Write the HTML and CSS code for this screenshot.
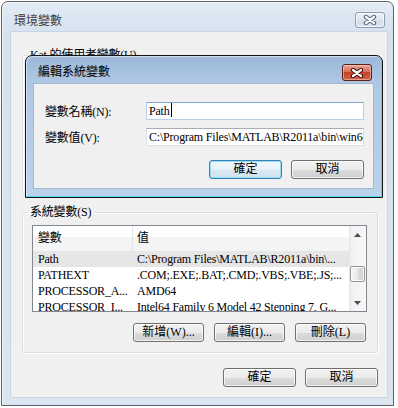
FILE: index.html
```html
<!DOCTYPE html>
<html lang="zh-TW">
<head>
    <meta charset="UTF-8">
    <title>環境變數</title>
    <link rel="stylesheet" href="styles.css">
</head>
<body>
    <div class="window env-window">
        <div class="titlebar">
            <span class="title">環境變數</span>
            <span class="close-btn inactive">
                <svg width="14" height="10" viewBox="0 0 14 10"><path d="M3 2 L11 8 M11 2 L3 8" stroke="#56657a" stroke-width="4.4" stroke-linecap="round"/><path d="M3 2 L11 8 M11 2 L3 8" stroke="#fff" stroke-width="2.2" stroke-linecap="round"/></svg>
            </span>
        </div>
        <div class="client">
            <!-- user variables: covered by the edit dialog -->
            <fieldset class="group user-group">
                <legend>Kat 的使用者變數(U)</legend>
            </fieldset>

            <fieldset class="group">
                <legend>系統變數(S)</legend>
                <div class="listview">
                    <div class="lv-body">
                        <div class="lv-header"><span class="col-name">變數</span><span class="col-value">值</span></div>
                        <div class="lv-row selected"><span class="col-name">Path</span><span class="col-value">C:\Program Files\MATLAB\R2011a\bin\...</span></div>
                        <div class="lv-row"><span class="col-name">PATHEXT</span><span class="col-value">.COM;.EXE;.BAT;.CMD;.VBS;.VBE;.JS;...</span></div>
                        <div class="lv-row"><span class="col-name">PROCESSOR_A...</span><span class="col-value">AMD64</span></div>
                        <div class="lv-row"><span class="col-name">PROCESSOR_I...</span><span class="col-value">Intel64 Family 6 Model 42 Stepping 7, G...</span></div>
                    </div>
                    <div class="scrollbar">
                        <div class="sb-arrow">
                            <svg width="7" height="4" viewBox="0 0 7 4"><path d="M0 4 L3.5 0 L7 4 Z" fill="#4d4d4d"/></svg>
                        </div>
                        <div class="sb-track"><div class="sb-thumb"></div></div>
                        <div class="sb-arrow">
                            <svg width="7" height="4" viewBox="0 0 7 4"><path d="M0 0 L3.5 4 L7 0 Z" fill="#4d4d4d"/></svg>
                        </div>
                    </div>
                </div>
                <div class="button-row group-buttons">
                    <button class="btn small">新增(W)...</button>
                    <button class="btn small">編輯(I)...</button>
                    <button class="btn small">刪除(L)</button>
                </div>
            </fieldset>

            <div class="button-row footer-buttons">
                <button class="btn">確定</button>
                <button class="btn">取消</button>
            </div>
        </div>
    </div>

    <div class="window edit-dialog">
        <div class="titlebar">
            <span class="title">編輯系統變數</span>
            <span class="close-btn active">
                <svg width="14" height="10" viewBox="0 0 14 10"><path d="M3 2 L11 8 M11 2 L3 8" stroke="#3f1208" stroke-width="4.4" stroke-linecap="round"/><path d="M3 2 L11 8 M11 2 L3 8" stroke="#fff" stroke-width="2.2" stroke-linecap="round"/></svg>
            </span>
        </div>
        <div class="client">
            <div class="field-row">
                <label class="field-label">變數名稱(N):</label>
                <div class="textbox focused">Path<span class="caret"></span></div>
            </div>
            <div class="field-row">
                <label class="field-label">變數值(V):</label>
                <div class="textbox">C:\Program Files\MATLAB\R2011a\bin\win64;C:\Windows\system32</div>
            </div>
            <div class="button-row dialog-buttons">
                <button class="btn default">確定</button>
                <button class="btn">取消</button>
            </div>
        </div>
    </div>
</body>
</html>
```

FILE: styles.css
```css
* {
    box-sizing: border-box;
}
body {
    margin: 0;
    width: 398px;
    height: 408px;
    overflow: hidden;
    position: relative;
    background: #fff;
    font-family: "Liberation Serif", "Noto Sans CJK TC", serif;
    font-size: 12px;
    letter-spacing: -0.2px;
    color: #000;
}
.window {
    display: flex;
    flex-direction: column;
    border: 1px solid #5b6067;
    border-radius: 7px 7px 0 0;
}
.titlebar {
    flex: none;
    display: flex;
    align-items: flex-start;
    justify-content: space-between;
}
.title {
    font-family: "Noto Sans CJK TC", sans-serif;
    font-size: 12px;
    line-height: 16px;
    letter-spacing: 0;
}
.close-btn {
    display: flex;
    align-items: center;
    justify-content: center;
    width: 30px;
    border-radius: 3px;
}

/* outer window (inactive) */
.env-window {
    margin: 1px 0 0 1px;
    width: 393px;
    height: 405px;
    padding: 0 5px 7px 8px;
    background: linear-gradient(#e3ebf5, #d6e2ef 30px, #dbe5f1);
    box-shadow: inset 1px 1px 0 rgba(255, 255, 255, 0.7);
}
.env-window .titlebar {
    height: 29px;
}
.env-window .title {
    margin: 10px 0 0 4px;
    color: #3f3f3f;
}
.env-window .close-btn {
    margin: 10px 3px 0 0;
    height: 16px;
}
.close-btn.inactive {
    border: 1px solid #8d9cb0;
    background: linear-gradient(#edf2f8, #dde6f0 50%, #d2dde9 50%, #dce5ef);
    box-shadow: inset 0 0 0 1px rgba(255, 255, 255, 0.6);
}
.env-window > .client {
    flex: 1;
    background: #f0f0f0;
    border: 1px solid #c8d5e3;
    padding: 0 9px 0 11px;
    display: flex;
    flex-direction: column;
}

/* group boxes */
.group {
    margin: 0;
    padding: 6px 10px 10px 9px;
    border: 1px solid #d5dfe5;
    border-radius: 3px;
    box-shadow: inset 1px 1px 0 #fff, 1px 1px 0 #fff;
    min-width: 0;
}
.group legend {
    padding: 0 2px;
    margin-left: -4px;
    line-height: 14px;
}
.user-group {
    margin-top: 16px;
    height: 148px;
}
.user-group + .group {
    margin-top: 9px;
}

/* list view */
.listview {
    display: flex;
    height: 87px;
    border: 1px solid #828790;
    background: #fff;
}
.lv-body {
    flex: 1;
    overflow: hidden;
}
.lv-header, .lv-row {
    display: flex;
    white-space: nowrap;
}
.lv-header {
    height: 25px;
    line-height: 25px;
    background: linear-gradient(#fff 45%, #f3f4f6 45%);
}
.lv-header .col-name {
    border-right: 1px solid #e3e5e8;
}
.lv-row {
    height: 16px;
    line-height: 16px;
}
.lv-row.selected {
    background: #e6e6e6;
}
.col-name {
    flex: none;
    width: 100px;
    padding-left: 5px;
    overflow: hidden;
}
.col-value {
    padding-left: 4px;
    overflow: hidden;
}

/* scrollbar */
.scrollbar {
    flex: none;
    width: 17px;
    display: flex;
    flex-direction: column;
    background: linear-gradient(90deg, #e6e6e6, #f2f2f2 3px, #f7f7f7);
}
.sb-arrow {
    height: 17px;
    display: flex;
    align-items: center;
    justify-content: center;
}
.sb-track {
    flex: 1;
}
.sb-thumb {
    margin: 23px 1px 0 1px;
    height: 16px;
    border: 1px solid #979797;
    border-radius: 2px;
    background: linear-gradient(90deg, #f4f4f4, #e9e9e9 50%, #dcdcdc 50%, #d2d2d2);
    box-shadow: inset 0 0 0 1px rgba(255, 255, 255, 0.8);
}

/* buttons */
.button-row {
    display: flex;
    justify-content: flex-end;
    gap: 9px;
}
.group-buttons {
    margin-top: 11px;
    padding-right: 1px;
    gap: 10px;
}
.footer-buttons {
    margin-top: 15px;
}
.btn {
    width: 73px;
    height: 19px;
    padding: 0;
    border: 1px solid #707070;
    border-radius: 3px;
    background: linear-gradient(#f2f2f2, #ebebeb 50%, #dddddd 50%, #cfcfcf);
    box-shadow: inset 0 0 0 1px rgba(255, 255, 255, 0.75);
    font: inherit;
    line-height: 17px;
    color: #000;
}
.btn.small {
    width: 71px;
}
.btn.default {
    border-color: #3c7fb1;
    background: linear-gradient(#f1f8fc, #e6f1f8 50%, #d8e8f3 50%, #cfe2ef);
    box-shadow: inset 0 0 0 1px #8fdcf8;
}

/* edit dialog (active, lies over the outer window) */
.edit-dialog {
    position: absolute;
    left: 25px;
    top: 55px;
    width: 358px;
    height: 143px;
    padding: 0 8px 8px 7px;
    border-color: #141414;
    background: linear-gradient(#9db8d9, #afc8e5 28px, #bad2eb);
    box-shadow: inset -1px -1px 0 #4fd8f2, inset 1px 1px 0 rgba(255, 255, 255, 0.5);
}
.edit-dialog .titlebar {
    height: 27px;
}
.edit-dialog .title {
    margin: 7px 0 0 5px;
}
.edit-dialog .close-btn {
    margin: 8px 2px 0 0;
    height: 17px;
}
.close-btn.active {
    border: 1px solid #5b1f15;
    background: linear-gradient(#e6a595, #d7705b 45%, #c4412a 50%, #d5654c);
    box-shadow: inset 0 0 0 1px rgba(255, 220, 210, 0.5);
}
.edit-dialog .client {
    flex: 1;
    background: #f0f0f0;
    border: 1px solid #a3b8d0;
    padding: 18px 9px 0 11px;
    display: flex;
    flex-direction: column;
    gap: 8px;
}
.field-row {
    display: flex;
    align-items: center;
}
.field-label {
    flex: none;
    width: 101px;
}
.textbox {
    flex: 1;
    height: 18px;
    padding: 0 2px;
    line-height: 16px;
    white-space: nowrap;
    overflow: hidden;
    background: #fff;
    border: 1px solid #dbdfe6;
    border-top-color: #abadb3;
}
.textbox.focused {
    border-color: #b7d1ec;
    border-top-color: #7fa6d2;
}
.caret {
    display: inline-block;
    width: 1px;
    height: 14px;
    margin-left: 1px;
    vertical-align: -2px;
    background: #000;
}
.dialog-buttons {
    margin-top: 6px;
}
```
